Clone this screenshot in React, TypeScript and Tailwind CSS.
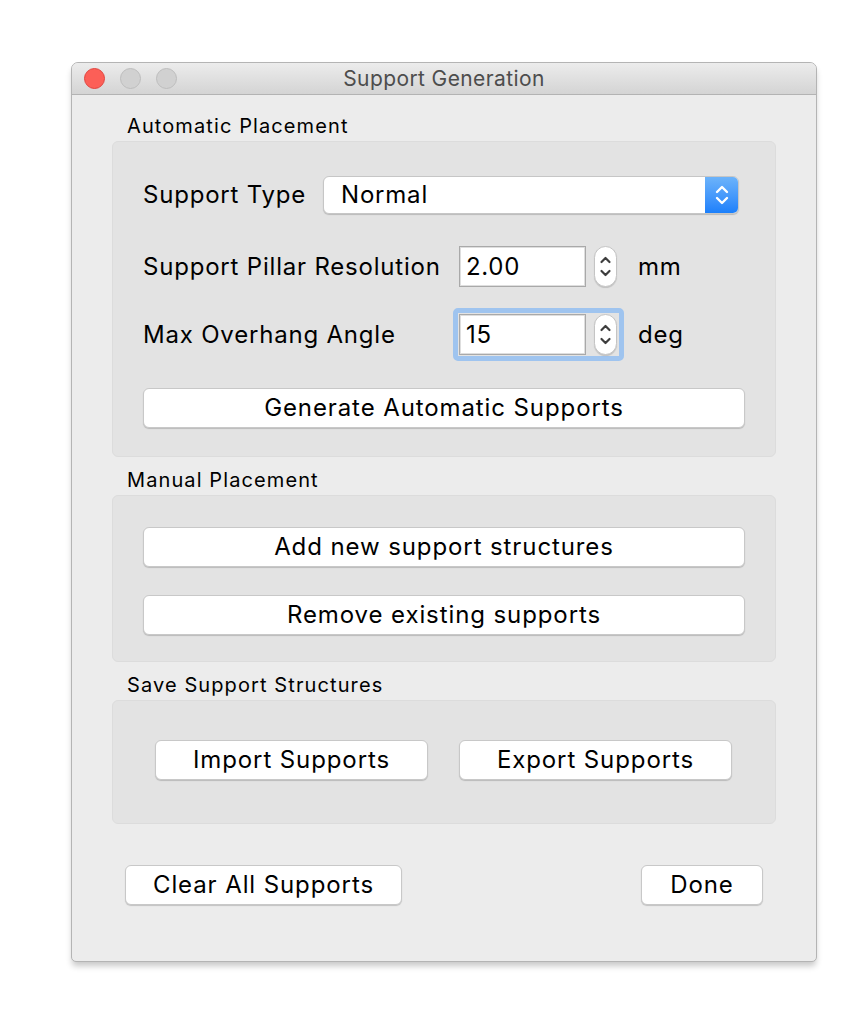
import React from "react";

const font = { fontFamily: "Inter, 'Liberation Sans', sans-serif" };

function Btn({ children, className = "" }: { children: React.ReactNode; className?: string }) {
  return (
    <div
      className={`flex items-center justify-center h-[40px] bg-white rounded-[6px] border border-[#c8c8c8] shadow-[0_1px_1px_rgba(0,0,0,0.18)] text-[24px] tracking-[0.9px] text-black leading-none ${className}`}
    >
      {children}
    </div>
  );
}

function Stepper() {
  return (
    <div className="w-[23px] h-[41px] bg-white rounded-full border border-[#c4c4c4] shadow-[0_1px_1px_rgba(0,0,0,0.15)] flex items-center justify-center">
      <svg width="13" height="27" viewBox="0 0 13 27" fill="none" stroke="#3e3e3e" strokeWidth="2.2" strokeLinecap="round" strokeLinejoin="round">
        <path d="M2.5 9 L6.5 5 L10.5 9" />
        <path d="M2.5 18 L6.5 22 L10.5 18" />
      </svg>
    </div>
  );
}

function NumberField({ value, focused }: { value: string; focused?: boolean }) {
  return (
    <div
      className={`flex items-center gap-[8px] p-[1px] pr-[2px] rounded-[5px] border-[5px] ${
        focused ? "border-[#9fc4ef]" : "border-transparent"
      }`}
    >
      <div className="w-[127px] h-[41px] bg-white border border-[#a9a9a9] shadow-[inset_0_0_0_1px_#dedede] flex items-center pl-[6px] text-[24px] tracking-[0.7px] text-black leading-none">
        {value}
      </div>
      <Stepper />
    </div>
  );
}

function SectionLabel({ children }: { children: React.ReactNode }) {
  return (
    <div className="pl-[15px] h-[24px] leading-[24px] text-[20px] tracking-[1.1px] text-black mb-[3px]">{children}</div>
  );
}

function Group({ children, className = "" }: { children: React.ReactNode; className?: string }) {
  return (
    <div className={`bg-[#e3e3e3] rounded-[6px] border border-[#dcdcdc] ${className}`}>{children}</div>
  );
}

const rowText = "text-[24px] tracking-[0.8px] text-black leading-none";

export default function App() {
  return (
    <div className="min-h-[1019px] bg-white pt-[62px] pl-[71px]" style={font}>
      <div className="w-[746px] h-[900px] bg-[#ececec] border border-[#b4b4b4] rounded-t-[7px] rounded-b-[5px] shadow-[0_5px_6px_-1px_rgba(0,0,0,0.22)] flex flex-col overflow-hidden">
        {/* Title bar */}
        <div className="relative h-[32px] bg-gradient-to-b from-[#ececec] to-[#d4d4d4] border-b border-[#b3b3b3] flex items-center shrink-0">
          <div className="flex items-center gap-[15px] pl-[12px]">
            <div className="w-[21px] h-[21px] rounded-full bg-[#fc5f57] border border-[#e0443e]" />
            <div className="w-[21px] h-[21px] rounded-full bg-[#d1d1d1] border border-[#bdbdbd]" />
            <div className="w-[21px] h-[21px] rounded-full bg-[#d1d1d1] border border-[#bdbdbd]" />
          </div>
          <div className="absolute inset-0 flex items-center justify-center text-[21px] tracking-[0.4px] text-[#4d4d4d] pointer-events-none">
            Support Generation
          </div>
        </div>

        {/* Content */}
        <div className="flex flex-col px-[40px] pt-[19px]">
          <SectionLabel>Automatic Placement</SectionLabel>
          <Group className="h-[316px] pl-[30px] pr-[30px] pt-[34px]">
            <div className="flex items-center h-[38px]">
              <div className={`w-[180px] ${rowText}`}>Support Type</div>
              <div className="flex h-[38px] w-[416px] rounded-[6px] bg-white border border-[#c6c6c6] shadow-[0_1px_1px_rgba(0,0,0,0.18)] overflow-hidden">
                <div className={`flex-1 flex items-center pl-[17px] ${rowText}`}>Normal</div>
                <div className="w-[33px] h-full bg-gradient-to-b from-[#6cb3fa] to-[#1b80fb] flex items-center justify-center">
                  <svg width="16" height="26" viewBox="0 0 16 26" fill="none" stroke="white" strokeWidth="2.4" strokeLinecap="round" strokeLinejoin="round">
                    <path d="M3 10 L8 5 L13 10" />
                    <path d="M3 16 L8 21 L13 16" />
                  </svg>
                </div>
              </div>
            </div>

            <div className="flex items-center mt-[26px]">
              <div className={`w-[310px] ${rowText}`}>Support Pillar Resolution</div>
              <NumberField value="2.00" />
              <div className={`ml-[14px] ${rowText}`}>mm</div>
            </div>

            <div className="flex items-center mt-[15px]">
              <div className={`w-[310px] ${rowText}`}>Max Overhang Angle</div>
              <NumberField value="15" focused />
              <div className={`ml-[14px] ${rowText}`}>deg</div>
            </div>

            <Btn className="mt-[27px]">Generate Automatic Supports</Btn>
          </Group>

          <div className="mt-[11px]">
            <SectionLabel>Manual Placement</SectionLabel>
          </div>
          <Group className="h-[167px] pl-[30px] pr-[30px] pt-[31px] flex flex-col gap-[28px]">
            <Btn>Add new support structures</Btn>
            <Btn>Remove existing supports</Btn>
          </Group>

          <div className="mt-[11px]">
            <SectionLabel>Save Support Structures</SectionLabel>
          </div>
          <Group className="h-[124px] pl-[42px] pt-[39px] flex gap-[31px]">
            <Btn className="w-[273px]">Import Supports</Btn>
            <Btn className="w-[273px]">Export Supports</Btn>
          </Group>
        </div>

        <div className="flex justify-between items-center pl-[53px] pr-[53px] mt-[41px]">
          <Btn className="w-[277px]">Clear All Supports</Btn>
          <Btn className="w-[122px]">Done</Btn>
        </div>
      </div>
    </div>
  );
}
